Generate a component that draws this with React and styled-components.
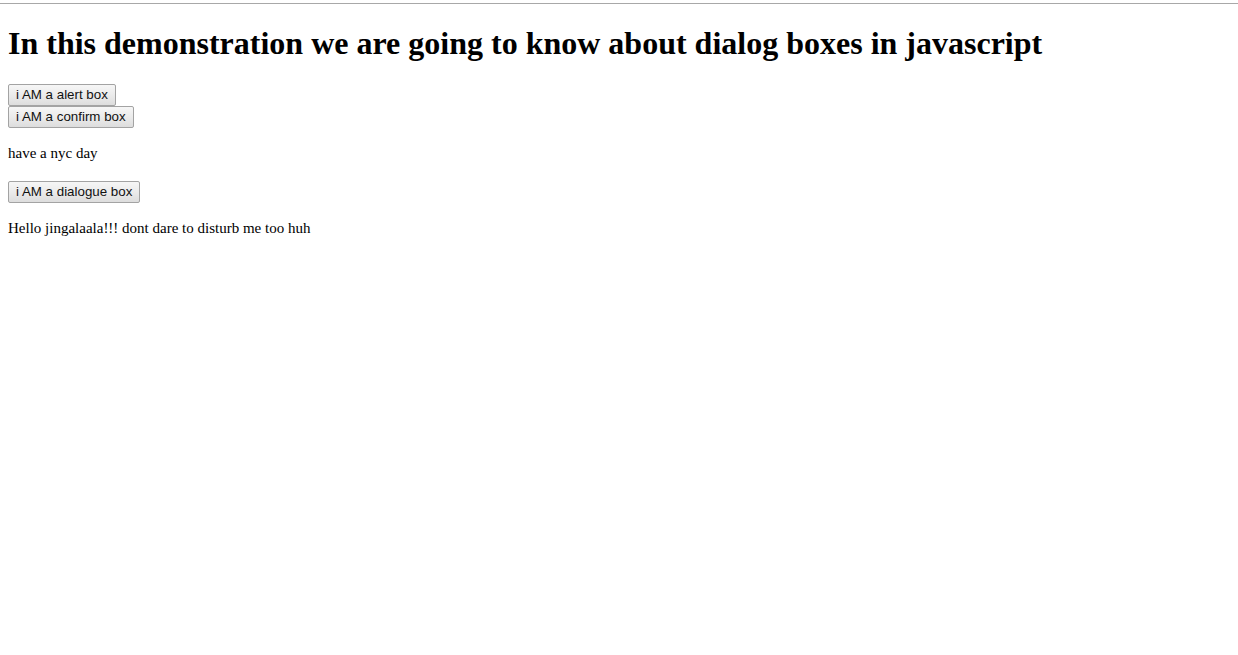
import React from "react";
import styled, { createGlobalStyle } from "styled-components";

const GlobalStyle = createGlobalStyle`
  html, body {
    margin: 0;
    padding: 0;
    background: #ffffff;
  }
  body {
    font-family: "Liberation Serif", "Times New Roman", serif;
    font-size: 16px;
    color: #000000;
  }
`;

const TopRule = styled.div`
  height: 3px;
  border-bottom: 1px solid #a8a8a8;
  background: #ffffff;
`;

const Page = styled.main`
  padding: 0 8px;
`;

const Heading = styled.h1`
  font-family: "Liberation Serif", "Times New Roman", serif;
  font-size: 32px;
  font-weight: bold;
  margin: 21.44px 0;
`;

const ButtonStack = styled.div`
  display: flex;
  flex-direction: column;
  align-items: flex-start;
`;

const Button = styled.button`
  box-sizing: border-box;
  display: inline-flex;
  align-items: center;
  height: 22px;
  font-family: "Liberation Sans", Arial, sans-serif;
  font-size: 13.333px;
  color: #111111;
  padding: 0 7px;
  margin: 0;
  border: 1px solid #a3a3a3;
  border-radius: 2px;
  background: linear-gradient(to bottom, #f6f6f6 0%, #ebebeb 50%, #dddddd 100%);
  line-height: 1;
  cursor: pointer;
`;

const Text = styled.p`
  margin: 16px 0 19px;
  font-size: 15px;
  line-height: 18px;
`;

export default function App() {
  return (
    <>
      <GlobalStyle />
      <TopRule />
      <Page>
        <Heading>In this demonstration we are going to know about dialog boxes in javascript</Heading>
        <ButtonStack>
          <Button type="button">i AM a alert box</Button>
          <Button type="button">i AM a confirm box</Button>
        </ButtonStack>
        <Text>have a nyc day</Text>
        <ButtonStack>
          <Button type="button">i AM a dialogue box</Button>
        </ButtonStack>
        <Text>Hello jingalaala!!! dont dare to disturb me too huh</Text>
      </Page>
    </>
  );
}
